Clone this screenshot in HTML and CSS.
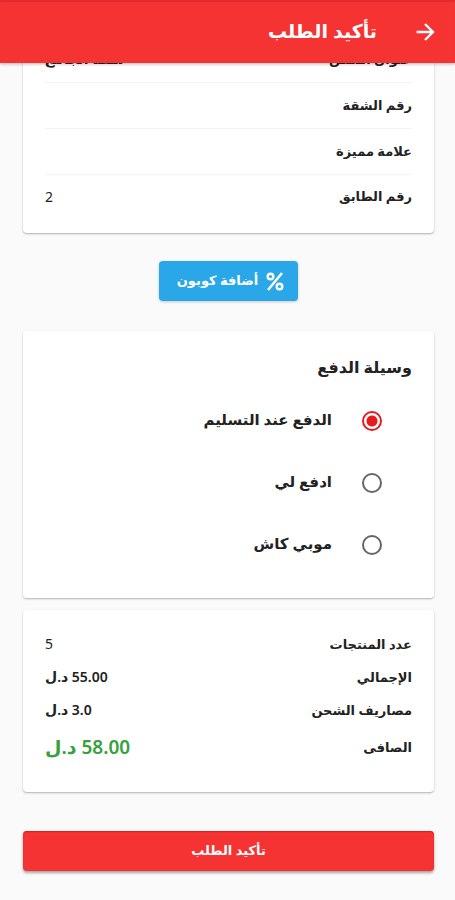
FILE: index.html
```html
<!DOCTYPE html>
<html lang="ar" dir="rtl">
<head>
<meta charset="utf-8">
<meta name="viewport" content="width=device-width, initial-scale=1">
<title>تأكيد الطلب</title>
<link rel="stylesheet" href="styles.css">
</head>
<body>
<header class="app-bar">
  <button class="back" type="button" aria-label="رجوع">
    <svg viewBox="0 0 24 24" width="24" height="24" fill="none" stroke="currentColor" stroke-width="2.400"><path d="M3.500 12H20M12 4l8 8-8 8"/></svg>
  </button>
  <h1 class="title">تأكيد الطلب</h1>
</header>
<main class="content">
  <section class="card address">
    <dl class="rows">
      <div class="row"><dt>عنوان السكن</dt><dd>شقة الجامع</dd></div>
      <div class="row"><dt>رقم الشقة</dt><dd></dd></div>
      <div class="row"><dt>علامة مميزة</dt><dd></dd></div>
      <div class="row"><dt>رقم الطابق</dt><dd class="count">2</dd></div>
    </dl>
  </section>
  <button class="coupon" type="button">
    <svg viewBox="0 0 18 20" width="18" height="20" fill="none" stroke="currentColor" stroke-width="2.400"><circle cx="4.500" cy="5.500" r="2.800"/><circle cx="13.500" cy="15.500" r="2.800"/><path d="M16 2L2 19"/></svg>
    <span>أضافة كوبون</span>
  </button>
  <fieldset class="card payment">
    <legend class="heading">وسيلة الدفع</legend>
    <label class="option"><input type="radio" name="pay" checked><span>الدفع عند التسليم</span></label>
    <label class="option"><input type="radio" name="pay"><span>ادفع لي</span></label>
    <label class="option"><input type="radio" name="pay"><span>موبي كاش</span></label>
  </fieldset>
  <section class="card summary">
    <dl class="totals">
      <div class="total"><dt>عدد المنتجات</dt><dd class="count">5</dd></div>
      <div class="total"><dt>الإجمالي</dt><dd>55.00 د.ل</dd></div>
      <div class="total"><dt>مصاريف الشحن</dt><dd>3.0 د.ل</dd></div>
      <div class="total net"><dt>الصافى</dt><dd>58.00 د.ل</dd></div>
    </dl>
  </section>
  <button class="confirm" type="submit">تأكيد الطلب</button>
</main>
</body>
</html>
```

FILE: styles.css
```css
* {
  box-sizing: border-box;
}

body {
  margin: 0;
  background: #fafafa;
  color: #222;
  font-family: "Noto Sans", "DejaVu Sans", sans-serif;
  font-size: 13px;
  font-weight: 600;
}

button {
  border: 0;
  font: inherit;
  color: #fff;
  cursor: pointer;
}

h1, dl, dd {
  margin: 0;
}

dd {
  font-size: 14px;
}

.app-bar {
  position: sticky;
  top: 0;
  z-index: 1;
  display: flex;
  align-items: center;
  gap: 36px;
  height: 63px;
  padding: 0 18px;
  background: #f63333;
  box-shadow: 0 1px 3px rgba(0, 0, 0, 0.3), inset 0 2px 1px #df2b2e;
  color: #fff;
}

.back {
  display: flex;
  padding: 0;
  background: none;
}

.title {
  padding-bottom: 2px;
  font-size: 19px;
  line-height: 24px;
  font-weight: 700;
}

.content {
  display: flex;
  flex-direction: column;
  margin-top: -26px;
  padding: 0 21px 28px 23px;
}

.card {
  margin: 0;
  border: 0;
  border-radius: 4px;
  background: #fff;
  box-shadow: 0 1px 2px rgba(0, 0, 0, 0.3);
  padding: 0 22px;
}

.address {
  padding-bottom: 12px;
}

.row {
  display: flex;
  align-items: center;
  justify-content: space-between;
  height: 46px;
  padding-bottom: 2px;
  border-bottom: 1px solid #f3f3f3;
}

.row:last-child {
  padding-bottom: 4px;
  border-bottom: 0;
}

.total .count,
.row .count {
  font-weight: 400;
}

.coupon {
  align-self: center;
  display: flex;
  align-items: center;
  gap: 8px;
  height: 40px;
  margin: 28px 0 30px;
  padding: 0 14px 0 18px;
  border-radius: 4px;
  background: #29a7e8;
  box-shadow: 0 1px 3px rgba(0, 0, 0, 0.2);
}

.coupon span {
  padding-bottom: 2px;
}

.payment {
  padding-top: 22px;
  padding-bottom: 22px;
}

.heading {
  float: right;
  width: 100%;
  margin-bottom: 9px;
  padding: 0;
  font-size: 16px;
  line-height: 28px;
}

.option {
  clear: both;
  display: flex;
  align-items: center;
  gap: 30px;
  height: 62px;
  padding-right: 30px;
  font-size: 15px;
}

.option span {
  padding-bottom: 4px;
}

.option input {
  appearance: none;
  width: 20px;
  height: 20px;
  margin: 0;
  border: 2px solid #666;
  border-radius: 50%;
}

.option input:checked {
  border-color: #e51c1f;
  background: radial-gradient(circle, #e51c1f 5px, #fff 6px);
}

.summary {
  margin-top: 12px;
  padding-top: 17px;
  padding-bottom: 24px;
}

.total {
  display: flex;
  align-items: center;
  justify-content: space-between;
  height: 33px;
}

.net {
  height: 42px;
}

.net dd {
  color: #37a13c;
  font-size: 19px;
}

.confirm {
  height: 40px;
  margin-top: 39px;
  padding: 0 0 2px;
  border-radius: 4px;
  background: #f63333;
  box-shadow: 0 2px 3px rgba(0, 0, 0, 0.35), inset 0 1px 1px #df1b20;
}
```
